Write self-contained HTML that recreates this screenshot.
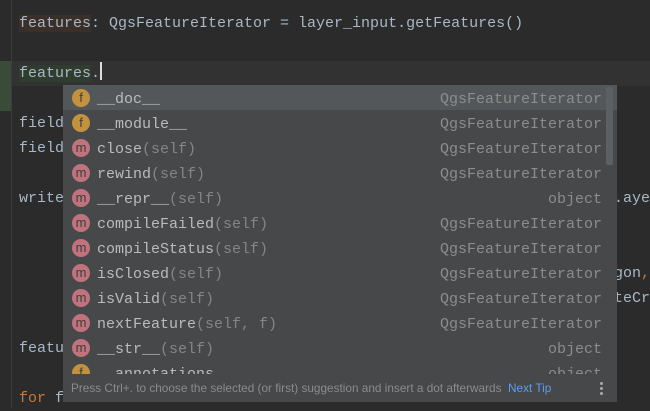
<!DOCTYPE html>
<html><head><style>
body{margin:0;width:650px;height:408px;background:#2b2b2b;overflow:hidden;position:relative;font-family:"Liberation Mono",monospace;font-size:15px;}
.gl{position:absolute;left:11px;top:0;width:1px;height:408px;background:#3c3c3c}
.cur{position:absolute;left:12px;top:61px;width:638px;height:25px;background:#323232}
.chg{position:absolute;left:0;top:61px;width:11px;height:50px;background:#384c38}
.ln{position:absolute;left:19px;color:#a9b7c6;white-space:pre;line-height:25px;height:25px}
.pop{position:absolute;left:63px;top:85px;width:554px;height:317px;background:#46484a;overflow:hidden}
.row{position:absolute;left:0;width:554px;height:25px;line-height:29px;white-space:pre;color:#bbbbbb}
.sel{background:#54575a}
.ic{position:absolute;left:9px;top:4px;width:18px;height:18px;border-radius:50%;font-size:13px;line-height:17px;text-align:center;color:#3d3d3d;font-family:"Liberation Sans",sans-serif}
.f{background:#c3923f}.m{background:#c0737c}
.nm{position:absolute;left:34px}
.g{color:#858585}
.ty{position:absolute;right:15px;color:#8c8c8c}
.sb{position:absolute;left:543px;top:2px;width:7px;height:78px;background:#5d6063;border-radius:2px}
.ft{position:absolute;left:0;top:289px;width:554px;height:28px;background:#46484a;font-family:"Liberation Sans",sans-serif;font-size:11.8px;color:#8b8b8b;line-height:28px;white-space:nowrap}
</style></head><body>
<div class="gl"></div><div class="cur"></div><div class="chg"></div>
<div class="ln" style="top:11px"><span style="background:#3b2f29">features</span>: QgsFeatureIterator = layer_input.getFeatures()</div>
<div class="ln" style="top:61px"><span style="background:#2f3d2f">features</span>.<span style="display:inline-block;width:2px;height:18px;background:#ddd;vertical-align:-3px"></span></div>
<div class="ln" style="top:111px">field</div>
<div class="ln" style="top:136px">field</div>
<div class="ln" style="top:186px">write</div>
<div class="ln" style="top:186px;left:614px">.aye</div>
<div class="ln" style="top:261px;left:614px">gon<span style="color:#cc7832">,</span></div>
<div class="ln" style="top:286px;left:614px">teCr</div>
<div class="ln" style="top:336px">featu</div>
<div class="ln" style="top:386px;left:19px"><span style="color:#cc7832">for</span> feature <span style="color:#cc7832">in</span> features:</div>
<div class="pop">
<div class="row sel" style="top:0"><div class="ic f">f</div><span class="nm">__doc__</span><span class="ty">QgsFeatureIterator</span></div>
<div class="row" style="top:25px"><div class="ic f">f</div><span class="nm">__module__</span><span class="ty">QgsFeatureIterator</span></div>
<div class="row" style="top:50px"><div class="ic m">m</div><span class="nm">close<span class="g">(self)</span></span><span class="ty">QgsFeatureIterator</span></div>
<div class="row" style="top:75px"><div class="ic m">m</div><span class="nm">rewind<span class="g">(self)</span></span><span class="ty">QgsFeatureIterator</span></div>
<div class="row" style="top:100px"><div class="ic m">m</div><span class="nm">__repr__<span class="g">(self)</span></span><span class="ty">object</span></div>
<div class="row" style="top:125px"><div class="ic m">m</div><span class="nm">compileFailed<span class="g">(self)</span></span><span class="ty">QgsFeatureIterator</span></div>
<div class="row" style="top:150px"><div class="ic m">m</div><span class="nm">compileStatus<span class="g">(self)</span></span><span class="ty">QgsFeatureIterator</span></div>
<div class="row" style="top:175px"><div class="ic m">m</div><span class="nm">isClosed<span class="g">(self)</span></span><span class="ty">QgsFeatureIterator</span></div>
<div class="row" style="top:200px"><div class="ic m">m</div><span class="nm">isValid<span class="g">(self)</span></span><span class="ty">QgsFeatureIterator</span></div>
<div class="row" style="top:225px"><div class="ic m">m</div><span class="nm">nextFeature<span class="g">(self, f)</span></span><span class="ty">QgsFeatureIterator</span></div>
<div class="row" style="top:250px"><div class="ic m">m</div><span class="nm">__str__<span class="g">(self)</span></span><span class="ty">object</span></div>
<div class="row" style="top:275px"><div class="ic f">f</div><span class="nm">__annotations__</span><span class="ty">object</span></div>
<div class="sb"></div>
<div class="ft"><span style="position:absolute;left:8px">Press Ctrl+. to choose the selected (or first) suggestion and insert a dot afterwards</span><span style="position:absolute;left:445px;color:#589df6">Next Tip</span><span style="position:absolute;left:537px;top:8px;width:3px;height:3px;background:#aaa;border-radius:50%"></span><span style="position:absolute;left:537px;top:13px;width:3px;height:3px;background:#aaa;border-radius:50%"></span><span style="position:absolute;left:537px;top:18px;width:3px;height:3px;background:#aaa;border-radius:50%"></span></div>
</div>
</body></html>
